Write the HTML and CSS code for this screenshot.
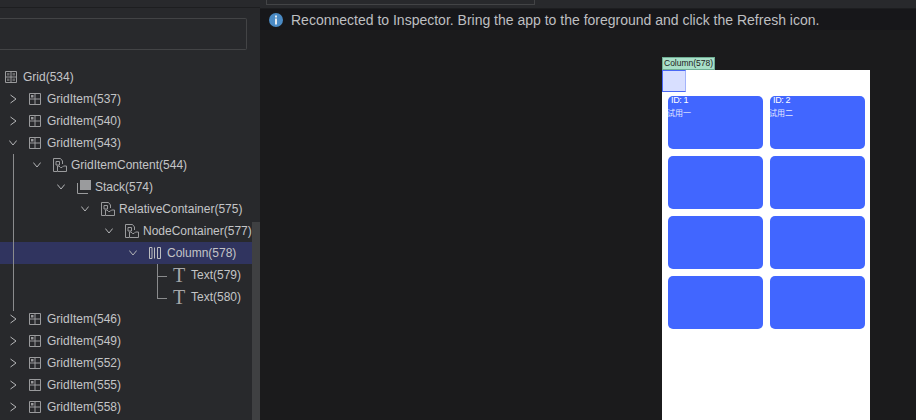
FILE: index.html
```html
<!DOCTYPE html>
<html lang="en">
<head>
<meta charset="utf-8">
<title>Inspector</title>
<link rel="stylesheet" href="styles.css">
</head>
<body>
<svg class="defs" width="0" height="0" aria-hidden="true">
  <symbol id="i-grid" viewBox="0 0 12 12"><path d="M.5.5h11v11H.5zM.5 6h11M6 .5V11.500" fill="none" stroke="currentColor"/><path d="M2 2h2.500v2.500H2zM7.500 2H10v2.500H7.500zM2 7.500h2.500V10H2zM7.500 7.500H10V10H7.500z" fill="currentColor" fill-opacity=".55"/></symbol>
  <symbol id="i-item" viewBox="0 0 12 12"><path d="M.5.5h11v11H.5zM.5 6h11M6 .5V11.500" fill="none" stroke="currentColor"/><path d="M2 2h2.500v2.500H2z" fill="currentColor"/></symbol>
  <symbol id="i-cont" viewBox="0 0 14 14"><path d="M4 13.500H.5V.5h7l2 2.500V6" fill="none" stroke="currentColor"/><path d="M3 3.500h3.500v3.500H3z" fill="none" stroke="currentColor"/><path d="M4.500 8v5.500h9V8h-3L9 9.500H7.500L6 8z" fill="none" stroke="currentColor"/></symbol>
  <symbol id="i-stack" viewBox="0 0 14 14"><path d="M3 0h11v10H3z" fill="currentColor"/><path d="M.5 3v10.500H11" fill="none" stroke="currentColor"/></symbol>
  <symbol id="i-col" viewBox="0 0 12 12"><path d="M.5.5h2.500v11H.5zM5.500.5v11M8.500.5h3v11h-3z" fill="none" stroke="currentColor"/></symbol>
  <symbol id="i-open" viewBox="0 0 8 10"><path d="M.3 2.500L4 7l3.700-4.500" fill="none" stroke="currentColor"/></symbol>
  <symbol id="i-shut" viewBox="0 0 8 10"><path d="M1.500 1L7 5l-5.500 4" fill="none" stroke="currentColor"/></symbol>
</svg>
<div class="app">
  <aside class="side">
    <div class="side-top"></div>
    <div class="search"></div>
    <div class="tree">
      <span class="guide guide-main"></span>
      <span class="guide guide-text"></span>
      <span class="tick tick-a"></span>
      <span class="tick tick-b"></span>
      <div class="row l0"><svg class="ico"><use href="#i-grid"/></svg><span>Grid(534)</span></div>
      <div class="row l1"><svg class="chev"><use href="#i-shut"/></svg><svg class="ico"><use href="#i-item"/></svg><span>GridItem(537)</span></div>
      <div class="row l1"><svg class="chev"><use href="#i-shut"/></svg><svg class="ico"><use href="#i-item"/></svg><span>GridItem(540)</span></div>
      <div class="row l1"><svg class="chev"><use href="#i-open"/></svg><svg class="ico"><use href="#i-item"/></svg><span>GridItem(543)</span></div>
      <div class="row l2"><svg class="chev"><use href="#i-open"/></svg><svg class="ico ico-lg"><use href="#i-cont"/></svg><span>GridItemContent(544)</span></div>
      <div class="row l3"><svg class="chev"><use href="#i-open"/></svg><svg class="ico ico-lg"><use href="#i-stack"/></svg><span>Stack(574)</span></div>
      <div class="row l4"><svg class="chev"><use href="#i-open"/></svg><svg class="ico ico-lg"><use href="#i-cont"/></svg><span>RelativeContainer(575)</span></div>
      <div class="row l5"><svg class="chev"><use href="#i-open"/></svg><svg class="ico ico-lg"><use href="#i-cont"/></svg><span>NodeContainer(577)</span></div>
      <div class="row l6 selected"><svg class="chev"><use href="#i-open"/></svg><svg class="ico"><use href="#i-col"/></svg><span>Column(578)</span></div>
      <div class="row l7"><span class="glyph-t">T</span><span>Text(579)</span></div>
      <div class="row l7"><span class="glyph-t">T</span><span>Text(580)</span></div>
      <div class="row l1"><svg class="chev"><use href="#i-shut"/></svg><svg class="ico"><use href="#i-item"/></svg><span>GridItem(546)</span></div>
      <div class="row l1"><svg class="chev"><use href="#i-shut"/></svg><svg class="ico"><use href="#i-item"/></svg><span>GridItem(549)</span></div>
      <div class="row l1"><svg class="chev"><use href="#i-shut"/></svg><svg class="ico"><use href="#i-item"/></svg><span>GridItem(552)</span></div>
      <div class="row l1"><svg class="chev"><use href="#i-shut"/></svg><svg class="ico"><use href="#i-item"/></svg><span>GridItem(555)</span></div>
      <div class="row l1"><svg class="chev"><use href="#i-shut"/></svg><svg class="ico"><use href="#i-item"/></svg><span>GridItem(558)</span></div>
    </div>
    <div class="scrollbar"></div>
  </aside>
  <main class="main">
    <div class="main-top"><div class="main-box"></div></div>
    <div class="notice">
      <svg class="info" viewBox="0 0 14 14"><circle cx="7" cy="7" r="7" fill="#4a8ac4"/><path d="M6 2.500h2v2H6zM6 5.500h2v6H6z" fill="#e4eaf0"/></svg>
      <span>Reconnected to Inspector. Bring the app to the foreground and click the Refresh icon.</span>
    </div>
    <div class="stage">
      <div class="phone">
        <div class="tag">Column(578)</div>
        <div class="pick"></div>
        <div class="cards">
          <div class="card"><div class="card-id">ID: 1</div><div class="card-name">试用一</div></div>
          <div class="card"><div class="card-id">ID: 2</div><div class="card-name">试用二</div></div>
          <div class="card"></div><div class="card"></div>
          <div class="card"></div><div class="card"></div>
          <div class="card"></div><div class="card"></div>
        </div>
      </div>
    </div>
  </main>
</div>
</body>
</html>
```

FILE: styles.css
```css
* { box-sizing: border-box; }
html, body { margin: 0; height: 100%; overflow: hidden; }
body { background: #1b1b1c; font-family: "Liberation Sans", Arial, sans-serif; color: #c4c5c7; }
.defs { position: absolute; }
.app { display: flex; height: 420px; }

.side { position: relative; width: 260px; flex: none; background: #28292c; overflow: hidden; }
.side-top { height: 8px; border-bottom: 1px solid #1d1e20; }
.search { height: 32px; width: 247px; margin-top: 10px; border: 1px solid #434446; border-left: 0; border-radius: 0 2px 2px 0; }
.tree { position: relative; margin-top: 16px; width: 252px; }
.row { display: flex; align-items: center; height: 22px; font-size: 12px; white-space: nowrap; }
.selected { background: #30345f; }
.selected .ico { color: #bcbdc0; }
.l0 { padding-left: 5px; }
.l1 { padding-left: 9px; }
.l2 { padding-left: 33px; }
.l3 { padding-left: 57px; }
.l4 { padding-left: 81px; }
.l5 { padding-left: 105px; }
.l6 { padding-left: 129px; }
.l7 { padding-left: 173px; }
.chev { width: 8px; height: 10px; margin-right: 12px; color: #b4b5b7; flex: none; }
.ico { width: 12px; height: 12px; margin-right: 6px; color: #9a9b9d; flex: none; }
.ico-lg { width: 14px; height: 14px; margin-right: 4px; }
.glyph-t { width: 12px; margin-right: 6px; font: 20px/22px "Liberation Serif", serif; color: #a6a7a9; text-align: center; }
.guide { position: absolute; width: 1px; background: #8a8b8d; }
.guide-main { left: 13px; top: 88px; height: 157px; }
.guide-text { left: 157px; top: 198px; height: 35px; }
.tick { position: absolute; left: 157px; width: 10px; height: 1px; background: #8a8b8d; }
.tick-a { top: 210px; }
.tick-b { top: 232px; }
.scrollbar { position: absolute; right: 0; top: 222px; bottom: 0; width: 8px; background: #3f4042; }

.main { flex: 1; display: flex; flex-direction: column; min-width: 0; }
.main-top { height: 9px; padding: 0 0 0 6px; background: #28292c; border-bottom: 1px solid #1d1e20; }
.main-box { width: 269px; height: 5px; border: 1px solid #434446; border-top: 0; }
.notice { display: flex; align-items: center; gap: 8px; height: 21px; padding-left: 9px; background: #17171a; font-size: 14px; color: #bebfc1; }
.info { width: 14px; height: 14px; flex: none; }
.stage { flex: 1; display: flex; padding: 40px 46px 0 402px; min-height: 0; }
.phone { position: relative; width: 208px; background: #fff; }
.tag { position: absolute; left: 0; top: -13px; width: 53px; height: 13px; padding: 0 1px; background: #a9dfc8; border: 1px solid #6fae93; font-size: 8.5px; line-height: 11px; color: #222; white-space: nowrap; }
.pick { position: absolute; left: 0; top: 0; width: 24px; height: 22px; background: #d8dfff; border: 1px solid #4a68f5; border-right-color: #a3b3fa; }
.cards { display: grid; grid-template-columns: 95px 95px; grid-auto-rows: 53px; column-gap: 7px; row-gap: 7px; padding: 26px 0 0 6px; }
.card { background: #4166ff; border-radius: 5px; color: #fff; overflow: hidden; }
.card-id { font-size: 9px; letter-spacing: -0.35px; line-height: 9px; padding: 0 0 0 3px; }
.card-name { font-family: "Noto Sans CJK SC", sans-serif; font-size: 8px; line-height: 10px; margin-left: -1px; padding-top: 3px; color: #e4e9ff; }
```
